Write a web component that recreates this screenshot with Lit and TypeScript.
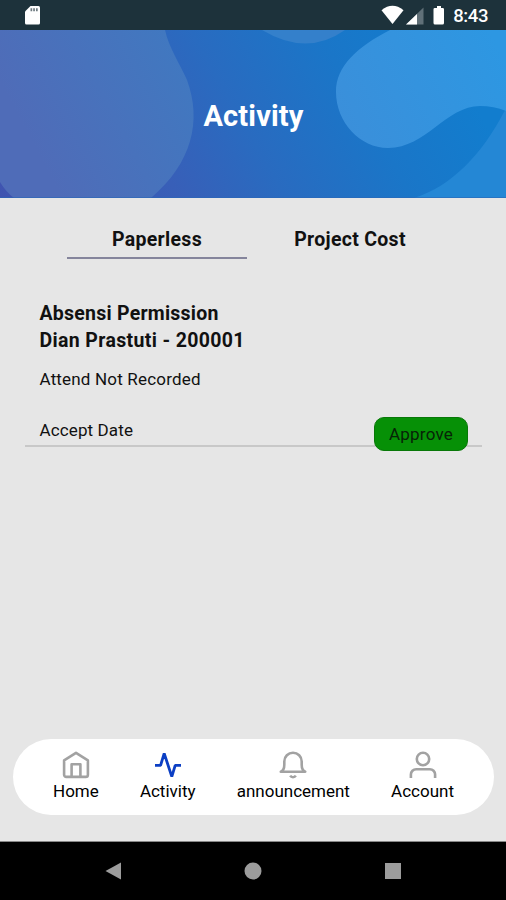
import { LitElement, html, css, svg } from "lit";
import { customElement, state } from "lit/decorators.js";

const navIcons: Record<string, unknown> = {
  home: svg`<path d="M2.1 9.4 14 1.9l11.9 7.5v14.3a2.2 2.2 0 0 1-2.2 2.2H4.3a2.2 2.2 0 0 1-2.2-2.2z"/><path d="M9.6 25.5V13.2h8.8v12.3"/>`,
  activity: svg`<path d="M1 14.3h5.6L10.2 2.4l7.6 23.2 3.4-11.3H27"/>`,
  bell: svg`<path d="M1.8 20.8c2.4-1.1 3.5-3.400 3.500-7.100V10.400a8.700 8.700 0 0 1 17.400 0v3.300c0 3.700 1.100 6 3.500 7.100z"/><path d="M11.200 24.700c1.200 2 4.400 2 5.600 0"/>`,
  user: svg`<circle cx="14" cy="8" r="6.2"/><path d="M1.900 27v-3.500a5.300 5.300 0 0 1 5.300-5.300h13.600a5.300 5.300 0 0 1 5.300 5.300V27"/>`,
};

const navItems = [
  { id: "home", label: "Home", icon: "home" },
  { id: "activity", label: "Activity", icon: "activity" },
  { id: "announcement", label: "announcement", icon: "bell" },
  { id: "account", label: "Account", icon: "user" },
];

@customElement("app-root")
export class AppRoot extends LitElement {
  @state() private page = "activity";
  @state() private tab = "Paperless";

  static styles = css`
    :host {
      display: flex;
      flex-direction: column;
      height: 900px;
      overflow: hidden;
      background: #e6e6e6;
      color: #111;
      font-family: Roboto, "Liberation Sans", sans-serif;
    }
    svg { display: block; }
    .status {
      flex: none;
      height: 30px;
      display: flex;
      align-items: center;
      justify-content: space-between;
      background: #1d323b;
      padding: 0 18px 0 24px;
    }
    .status-right { display: flex; align-items: center; color: #fff; }
    .clock {
      font-size: 18.5px;
      font-weight: 500;
      letter-spacing: -0.4px;
      line-height: 30px;
      padding-top: 2px;
      margin-left: 2px;
    }
    .header {
      flex: none;
      height: 168px;
      display: grid;
      overflow: hidden;
    }
    .header > * { grid-area: 1 / 1; }
    .title {
      margin: 0;
      place-self: center;
      color: #fff;
      font-size: 29px;
      letter-spacing: 0.15px;
      line-height: 34px;
      font-weight: 700;
      padding: 4px 0 0 1px;
    }
    .tabs {
      flex: none;
      display: grid;
      grid-template-columns: 180px 180px;
      column-gap: 13px;
      margin: 24px 0 0 67px;
    }
    .tab {
      height: 37px;
      box-sizing: border-box;
      border-bottom: 2px solid transparent;
      text-align: center;
      font-size: 19.5px;
      letter-spacing: 0.3px;
      font-weight: 700;
      line-height: 36px;
    }
    .tab.on { border-color: #85859c; }
    .entry {
      flex: none;
      margin: 41px 24px 0 25px;
      padding: 0 14px 0 14.5px;
      height: 145px;
      border-bottom: 2px solid #c8c8c8;
    }
    .entry-title { font-size: 19.5px; line-height: 27px; font-weight: 700; letter-spacing: 0.24px; }
    .second { letter-spacing: 0.35px; }
    .note { font-size: 17px; line-height: 24px; margin-top: 13px; letter-spacing: 0.18px; }
    .foot { display: flex; justify-content: space-between; margin-top: 26px; }
    .date { font-size: 17px; line-height: 24px; letter-spacing: 0.12px; padding-top: 1px; }
    .approve {
      width: 94px;
      height: 34px;
      border: 1px solid #087808;
      border-radius: 10px;
      background: #069006;
      color: #062306;
      font: 17px/33px Roboto, sans-serif;
      letter-spacing: 0.25px;
      padding: 0;
    }
    .spacer { flex: 1; }
    .nav {
      flex: none;
      box-sizing: border-box;
      height: 76px;
      margin: 0 12px 27px 13px;
      padding: 12px 40px 0;
      border-radius: 38px;
      background: #fff;
      display: flex;
      justify-content: space-between;
    }
    .item { display: flex; flex-direction: column; align-items: center; color: #000; }
    .glyph { fill: none; stroke: #a2a2a2; stroke-width: 2.6; stroke-linejoin: round; }
    .item.on .glyph { stroke: #0c3fc4; stroke-width: 2.8; stroke-linejoin: bevel; }
    .label { font-size: 17px; line-height: 20px; margin-top: 2px; }
    .system {
      flex: none;
      height: 58px;
      background: #000;
      box-shadow: 0 -1px 0 #888;
      display: flex;
      align-items: center;
      justify-content: space-between;
      padding: 0 104px 0 104px;
    }
  `;

  private backdrop() {
    return html`<svg width="506" height="168" viewBox="0 0 506 168" aria-hidden="true">
      <defs>
        <linearGradient id="base" gradientUnits="userSpaceOnUse" x1="0" y1="168" x2="400" y2="-59">
          <stop offset="0" stop-color="#4054b0" />
          <stop offset=".34" stop-color="#385fb8" />
          <stop offset=".54" stop-color="#296bc0" />
          <stop offset=".78" stop-color="#1a76c8" />
          <stop offset="1" stop-color="#127dce" />
        </linearGradient>
        <linearGradient id="left" gradientUnits="userSpaceOnUse" x1="20" y1="90" x2="170" y2="10">
          <stop offset="0" stop-color="#4f6cb8" />
          <stop offset="1" stop-color="#4178c0" />
        </linearGradient>
        <linearGradient id="right" gradientUnits="userSpaceOnUse" x1="340" y1="100" x2="500" y2="20">
          <stop offset="0" stop-color="#3b8fda" />
          <stop offset="1" stop-color="#2d97e2" />
        </linearGradient>
      </defs>
      <rect width="506" height="168" fill="url(#base)" />
      <path d="M0 0H165C169 18 180 34 187 50C202 91 192 133 151 168H14Q6 162 0 152Z" fill="url(#left)" />
      <path d="M262 0Q307 27 345 0Z" fill="#3480cb" />
      <path d="M506 80L504 82C482 124 452 156 414 168H506Z" fill="#2487d5" />
      <path d="M390 0C357 17 336 36 336 62C336 92 360 118 388 118C426 118 446 76 480 76Q494 76 506 81V0Z" fill="url(#right)" />
      <rect y="167" width="506" height="1" fill="#2a68b8" opacity=".6" />
    </svg>`;
  }

  render() {
    return html`
      <div class="status">
        <svg width="18" height="20" viewBox="0 0 18 20">
          <path d="M6.500 1H14.500A1.500 1.500 0 0 1 16 2.500V18A1.500 1.500 0 0 1 14.500 19.500H2.500A1.500 1.500 0 0 1 1 18V6.500Z" fill="#fff" />
          <path d="M6.500 3.200h1.700v3H6.500zM9.200 3.200h1.700v3H9.200zM12 3.200h1.700v3H12z" fill="#6e7b80" />
        </svg>
        <div class="status-right">
          <svg width="70" height="22" viewBox="0 0 70 22">
            <path d="M.5 6.200Q11.500-2.600 22.500 6.200L11.500 20Z" fill="#fff" />
            <path d="M42.500 3.500V20.500H25Z" fill="#607078" />
            <path d="M36 10V20.500H25Z" fill="#fff" />
            <path d="M56 2h4V4h1.700a1.300 1.300 0 0 1 1.300 1.300V19a1.500 1.500 0 0 1-1.500 1.500H54A1.500 1.500 0 0 1 52.500 19V5.300A1.300 1.300 0 0 1 53.800 4H56Z" fill="#fff" />
          </svg>
          <span class="clock">8:43</span>
        </div>
      </div>
      <div class="header">
        ${this.backdrop()}
        <h1 class="title">Activity</h1>
      </div>
      <div class="tabs">
        ${["Paperless", "Project Cost"].map(
          (t) => html`<div class="tab ${t === this.tab ? "on" : ""}" @click=${() => (this.tab = t)}>${t}</div>`
        )}
      </div>
      <div class="entry">
        <div class="entry-title">Absensi Permission</div>
        <div class="entry-title second">Dian Prastuti - 200001</div>
        <div class="note">Attend Not Recorded</div>
        <div class="foot">
          <span class="date">Accept Date</span>
          <button class="approve">Approve</button>
        </div>
      </div>
      <div class="spacer"></div>
      <div class="nav">
        ${navItems.map(
          (n) => html`<div class="item ${n.id === this.page ? "on" : ""}" @click=${() => (this.page = n.id)}>
            <svg class="glyph" width="28" height="28" viewBox="0 0 28 28">${navIcons[n.icon]}</svg>
            <span class="label">${n.label}</span>
          </div>`
        )}
      </div>
      <div class="system">
        <svg width="18" height="18" viewBox="0 0 18 18"><path d="M1.500 9 17 .5V17.500Z" fill="#9c9c9c" /></svg>
        <svg width="18" height="18" viewBox="0 0 18 18"><circle cx="9" cy="9" r="8.500" fill="#9c9c9c" /></svg>
        <svg width="18" height="18" viewBox="0 0 18 18"><rect x="1" y="1" width="16" height="16" fill="#9c9c9c" /></svg>
      </div>
    `;
  }
}
